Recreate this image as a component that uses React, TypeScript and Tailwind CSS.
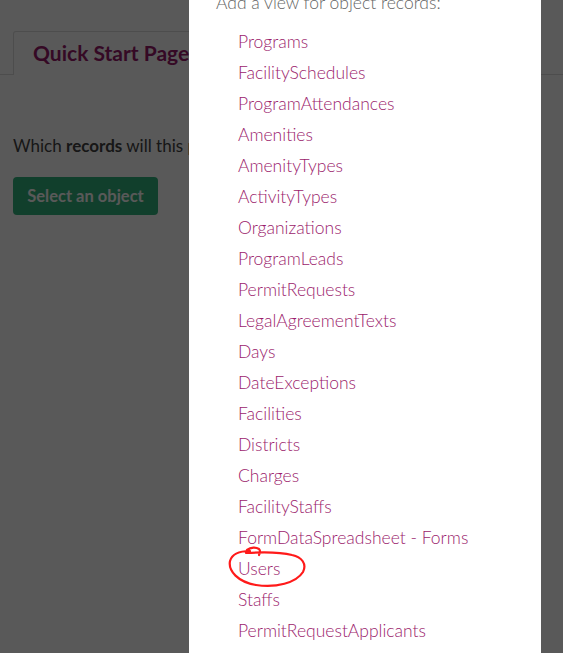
const objects = [
  'Programs',
  'FacilitySchedules',
  'ProgramAttendances',
  'Amenities',
  'AmenityTypes',
  'ActivityTypes',
  'Organizations',
  'ProgramLeads',
  'PermitRequests',
  'LegalAgreementTexts',
  'Days',
  'DateExceptions',
  'Facilities',
  'Districts',
  'Charges',
  'FacilityStaffs',
  'FormDataSpreadsheet - Forms',
  'Users',
  'Staffs',
  'PermitRequestApplicants',
]

function Scribble() {
  // hand drawn red ring around "Users"
  return (
    <svg
      className="pointer-events-none absolute -left-[12px] -top-[14px]"
      width="84"
      height="46"
      viewBox="0 0 84 46"
      fill="none"
    >
      <path
        d="M24 7 C14 7 6 10 4 17 C2 27 12 38 30 41 C50 44 70 39 77 28 C81 20 76 13 66 11 C54 8 38 8 20 9 M21 6 C25 3 30 3 33 5 C35 7 34 9 33 11"
        stroke="#ff1a1a"
        strokeWidth="2.2"
        strokeLinecap="round"
        strokeLinejoin="round"
      />
    </svg>
  )
}

export default function App() {
  return (
    <div className="relative h-[653px] w-full overflow-hidden bg-white font-['Lato','Liberation_Sans',sans-serif]">
      {/* page behind the modal */}
      <div className="pt-[31px]">
        <div className="flex border-b border-[#dddddd] pl-[13px]">
          <div className="-mb-px flex h-[44px] items-center rounded-t-[3px] border border-b-0 border-[#dddddd] bg-white px-[19px] pb-[2px] pr-[60px]">
            <span className="text-[21px] font-bold text-[#981b6b]">Quick Start Page</span>
          </div>
        </div>
        <div className="px-[13px] pt-[59px]">
          <p className="text-[17px] leading-[24px] text-[#444444]">
            Which <b className="font-bold">records</b> will this page show?
          </p>
          <button className="mt-[19px] h-[38px] w-[145px] rounded-[4px] bg-[#33b47e] text-[16.5px] font-bold text-white">
            Select an object
          </button>
        </div>
      </div>

      <div className="absolute inset-0 bg-black/65" />

      {/* modal */}
      <div className="absolute left-[189px] top-0 h-full w-[352px] bg-white">
        <p className="-mt-[9px] pl-[27px] text-[17.5px] font-light leading-[24px] text-[#666666]">
          Add a view for object records:
        </p>
        <ul className="pl-[49px] pt-[11px]">
          {objects.map((name) => (
            <li key={name} className="h-[31px] text-[17.5px] font-light leading-[31px] text-[#9b1c6c]">
              <span className="relative">
                {name}
                {name === 'Users' && <Scribble />}
              </span>
            </li>
          ))}
        </ul>
      </div>
    </div>
  )
}
